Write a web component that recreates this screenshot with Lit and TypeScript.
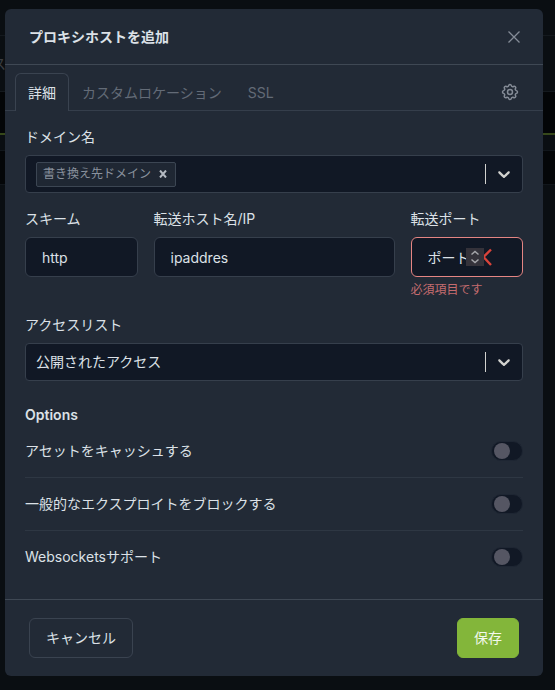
import { LitElement, html, css, svg } from "lit";
import { customElement, property, state } from "lit/decorators.js";

const chevronDown = html`<svg class="chevron" viewBox="0 0 20 20" aria-hidden="true">
  <path d="M4.516 7.548c0.436-0.446 1.043-0.481 1.576 0l3.908 3.747 3.908-3.747c0.533-0.481 1.141-0.446 1.574 0 0.436 0.445 0.408 1.197 0 1.615-0.406 0.418-4.695 4.502-4.695 4.502-0.217 0.223-0.502 0.335-0.787 0.335s-0.57-0.112-0.789-0.335c0 0-4.287-4.084-4.695-4.502s-0.436-1.17 0-1.615z"/>
</svg>`;

const spinArrow = (d: string) => svg`<path d=${d} />`;

/** One labelled on/off row in the options list. */
@customElement("option-switch")
class OptionSwitch extends LitElement {
  static styles = css`
    :host {
      display: block;
    }
    .row {
      display: flex;
      align-items: center;
      justify-content: space-between;
      height: 52px;
      cursor: pointer;
    }
    .switch {
      appearance: none;
      flex: none;
      box-sizing: border-box;
      width: 32px;
      height: 20px;
      margin: 0;
      padding: 1px 2px;
      border: 1px solid #1e2633;
      border-radius: 10px;
      background: #111825;
      cursor: pointer;
      display: flex;
    }
    .switch::before {
      content: "";
      width: 16px;
      height: 16px;
      border-radius: 50%;
      background: #555663;
    }
    .switch:checked {
      justify-content: flex-end;
      background: #83b63a;
    }
  `;

  @property() label = "";
  @property({ type: Boolean }) checked = false;

  render() {
    return html`<label class="row">
      <span>${this.label}</span>
      <input class="switch" type="checkbox" role="switch" .checked=${this.checked} />
    </label>`;
  }
}

@customElement("app-root")
class AppRoot extends LitElement {
  static styles = css`
    :host {
      display: block;
      font-family: Inter, "Noto Sans CJK JP", sans-serif;
      font-size: 14px;
      line-height: 20px;
      color: #dce1e7;
    }
    * {
      box-sizing: border-box;
    }
    input,
    select,
    button {
      font: inherit;
      color: inherit;
    }
    .page {
      display: grid;
      min-height: 100vh;
      background: #0a0e12;
    }
    .page > * {
      grid-area: 1 / 1;
    }

    /* dimmed page behind the dialog */
    .backdrop {
      display: flex;
      flex-direction: column;
      overflow: hidden;
      color: #3a3e42;
    }
    .topbar {
      height: 36px;
      border-bottom: 1px solid #14191e;
    }
    .menubar {
      display: flex;
      align-items: center;
      height: 56px;
      border-bottom: 1px solid #14191e;
      white-space: nowrap;
    }
    .menu-item {
      width: 6px;
      display: flex;
      justify-content: flex-end;
    }
    .gap {
      height: 41px;
      background: #030507;
    }
    .card-head {
      height: 17px;
      border-top: 2px solid #36481a;
    }
    .card-table {
      height: 35px;
      background: #040608;
      border-top: 1px solid #11161b;
      border-bottom: 1px solid #11161b;
    }

    .modal {
      align-self: start;
      margin: 9px 12px 14px 5px;
      border-radius: 6px;
      background: #222a36;
    }
    .header {
      display: flex;
      align-items: center;
      justify-content: space-between;
      height: 56px;
      padding: 0 20px 0 24px;
      border-bottom: 1px solid #3f4854;
    }
    .title {
      margin: 0;
      font-size: 14px;
      font-weight: 600;
    }
    .icon-button {
      display: grid;
      place-items: center;
      width: 18px;
      height: 18px;
      padding: 0;
      border: 0;
      background: none;
      color: #858c97;
      cursor: pointer;
    }
    .icon {
      width: 20px;
      height: 20px;
      fill: none;
      stroke: currentColor;
      stroke-width: 1.8;
      stroke-linecap: round;
      stroke-linejoin: round;
    }
    .close-icon {
      width: 12px;
      height: 12px;
      fill: none;
      stroke: currentColor;
      stroke-width: 1.3;
    }
    .tabs {
      display: flex;
      height: 46px;
      padding: 8px 23px 0 10px;
      border-bottom: 1px solid #353e4b;
    }
    .tab {
      height: 38px;
      padding: 0 12px;
      border: 1px solid transparent;
      border-bottom: 0;
      border-radius: 6px 6px 0 0;
      background: none;
      color: #636b77;
      cursor: pointer;
    }
    .tab[aria-selected="true"] {
      border-color: #3a4350;
      background: #222a36;
      color: #dce1e7;
    }
    .settings {
      width: 20px;
      height: 20px;
      margin: 9px 0 0 auto;
    }

    .body {
      display: grid;
      gap: 16px;
      padding: 16px 20px;
    }
    .field {
      display: grid;
      align-content: start;
      gap: 8px;
      min-width: 0;
    }
    .columns {
      display: grid;
      grid-template-columns: repeat(4, minmax(0, 1fr));
      gap: 16px;
    }
    .wide {
      grid-column: span 2;
    }
    .combo {
      position: relative;
      display: flex;
      align-items: center;
      height: 38px;
      border: 1px solid #363f4c;
      border-radius: 4px;
      background: #111825;
    }
    .chip {
      display: flex;
      align-items: center;
      height: 25px;
      margin-left: 10px;
      border: 1px solid #3c4653;
      border-radius: 2px;
      background: #1f2733;
      color: #8a929e;
      font-size: 12px;
      white-space: nowrap;
    }
    .chip-text {
      padding-left: 6px;
    }
    .chip-remove {
      display: grid;
      place-items: center;
      width: 24px;
      height: 23px;
      padding: 0;
      border: 0;
      background: none;
      color: #b4bac2;
      cursor: pointer;
    }
    .chip-remove svg {
      width: 8px;
      height: 8px;
      fill: none;
      stroke: currentColor;
      stroke-width: 2;
    }
    .combo-input {
      flex: 1;
      min-width: 0;
      height: 24px;
      padding: 0 4px;
      border: 0;
      outline: 0;
      background: none;
    }
    .combo-select {
      appearance: none;
      width: 100%;
      height: 36px;
      padding: 0 56px 0 10px;
      border: 0;
      outline: 0;
      background: none;
    }
    .indicator {
      position: absolute;
      right: 0;
      display: flex;
      align-items: center;
      gap: 8px;
      padding-right: 8px;
      pointer-events: none;
    }
    .indicator::before {
      content: "";
      width: 1px;
      height: 20px;
      background: #d2d2cf;
    }
    .chevron {
      width: 20px;
      height: 20px;
      fill: #d2d2cf;
    }
    .input {
      width: 100%;
      height: 40px;
      padding: 0 16px;
      border: 1px solid #363f4c;
      border-radius: 6px;
      outline: 0;
      background: #111825;
    }
    .input::placeholder {
      color: inherit;
      opacity: 1;
    }
    .input[aria-invalid="true"] {
      border-color: #e58583;
    }
    .input[type="number"] {
      appearance: textfield;
    }
    .input::-webkit-inner-spin-button {
      display: none;
    }
    .port {
      position: relative;
      display: grid;
    }
    .marks {
      position: absolute;
      inset: 0 31px 0 auto;
      display: flex;
      align-items: center;
      pointer-events: none;
    }
    .spinner {
      width: 18px;
      height: 18px;
      background: #34323a;
      fill: none;
      stroke: #a5a6aa;
      stroke-width: 1.5;
    }
    .cross {
      width: 8px;
      height: 18px;
      fill: none;
      stroke: #d8433a;
      stroke-width: 2.4;
    }
    .error {
      margin: -4px 0 0;
      font-size: 12px;
      line-height: 18px;
      color: #c56c6f;
    }
    .options {
      margin-top: 8px;
    }
    .options-title {
      margin: 0;
      font-size: 14px;
      font-weight: 600;
    }
    .option + .option {
      border-top: 1px solid #2e3743;
    }
    .footer {
      display: flex;
      align-items: center;
      justify-content: space-between;
      padding: 18px 24px;
      border-top: 1px solid #3f4854;
    }
    .button {
      height: 40px;
      padding: 0 16px;
      border: 1px solid #3a4350;
      border-radius: 6px;
      background: none;
      cursor: pointer;
    }
    .primary {
      border-color: #83b63a;
      background: #83b63a;
      color: #f3f8eb;
    }
  `;

  @state() private tab = 0;

  private tabs = ["詳細", "カスタムロケーション", "SSL"];
  private options = [
    "アセットをキャッシュする",
    "一般的なエクスプロイトをブロックする",
    "Websocketsサポート",
  ];

  render() {
    return html`<div class="page">
      <div class="backdrop" aria-hidden="true">
        <div class="topbar"></div>
        <div class="menubar"><span class="menu-item">ス</span></div>
        <div class="gap"></div>
        <div class="card-head"></div>
        <div class="card-table"></div>
      </div>
      <form class="modal" role="dialog" aria-labelledby="title" @submit=${(e: Event) => e.preventDefault()}>
        <header class="header">
          <h1 class="title" id="title">プロキシホストを追加</h1>
          <button class="icon-button" type="button" aria-label="閉じる">
            <svg class="close-icon" viewBox="0 0 12 12"><path d="M.5.5l11 11M11.5.5l-11 11" /></svg>
          </button>
        </header>
        <div class="tabs" role="tablist">
          ${this.tabs.map(
            (name, i) => html`<button class="tab" type="button" role="tab"
              aria-selected=${this.tab === i ? "true" : "false"}
              @click=${() => (this.tab = i)}>${name}</button>`
          )}
          <button class="icon-button settings" type="button" aria-label="設定">
            <svg class="icon" viewBox="0 0 24 24">
              <path d="M10.325 4.317c.426-1.756 2.924-1.756 3.35 0a1.724 1.724 0 0 0 2.573 1.066c1.543-.94 3.31.826 2.37 2.37a1.724 1.724 0 0 0 1.065 2.572c1.756.426 1.756 2.924 0 3.35a1.724 1.724 0 0 0-1.066 2.573c.94 1.543-.826 3.31-2.37 2.37a1.724 1.724 0 0 0-2.572 1.065c-.426 1.756-2.924 1.756-3.35 0a1.724 1.724 0 0 0-2.573-1.066c-1.543.94-3.31-.826-2.37-2.37a1.724 1.724 0 0 0-1.065-2.572c-1.756-.426-1.756-2.924 0-3.35a1.724 1.724 0 0 0 1.066-2.573c-.94-1.543.826-3.31 2.37-2.37 1 .608 2.296.07 2.572-1.065z" />
              <path d="M9 12a3 3 0 1 0 6 0a3 3 0 0 0-6 0" />
            </svg>
          </button>
        </div>
        <div class="body">
          <div class="field">
            <label for="domain">ドメイン名</label>
            <div class="combo">
              <span class="chip">
                <span class="chip-text">書き換え先ドメイン</span>
                <button class="chip-remove" type="button" aria-label="削除">
                  <svg viewBox="0 0 8 8"><path d="M1 .5l6 7M7 .5l-6 7" /></svg>
                </button>
              </span>
              <input class="combo-input" id="domain" type="text" />
              <span class="indicator">${chevronDown}</span>
            </div>
          </div>
          <div class="columns">
            <div class="field">
              <label for="scheme">スキーム</label>
              <input class="input" id="scheme" type="text" value="http" />
            </div>
            <div class="field wide">
              <label for="host">転送ホスト名/IP</label>
              <input class="input" id="host" type="text" value="ipaddres" />
            </div>
            <div class="field">
              <label for="port">転送ポート</label>
              <div class="port">
                <input class="input" id="port" type="number" placeholder="ポート" aria-invalid="true" aria-describedby="port-error" />
                <span class="marks">
                  <svg class="spinner" viewBox="0 0 18 18">
                    ${spinArrow("M5.5 6.5L9 3.5l3.5 3")}${spinArrow("M5.5 11.5L9 14.5l3.5-3")}
                  </svg>
                  <svg class="cross" viewBox="0 0 8 18"><path d="M7 1.5L0 8.5v1L7 17" /></svg>
                </span>
              </div>
              <p class="error" id="port-error">必須項目です</p>
            </div>
          </div>
          <div class="field">
            <label for="access">アクセスリスト</label>
            <div class="combo">
              <select class="combo-select" id="access">
                <option>公開されたアクセス</option>
              </select>
              <span class="indicator">${chevronDown}</span>
            </div>
          </div>
          <section class="options">
            <h2 class="options-title">Options</h2>
            ${this.options.map((o) => html`<option-switch class="option" label=${o}></option-switch>`)}
          </section>
        </div>
        <footer class="footer">
          <button class="button" type="button">キャンセル</button>
          <button class="button primary" type="submit">保存</button>
        </footer>
      </form>
    </div>`;
  }
}
